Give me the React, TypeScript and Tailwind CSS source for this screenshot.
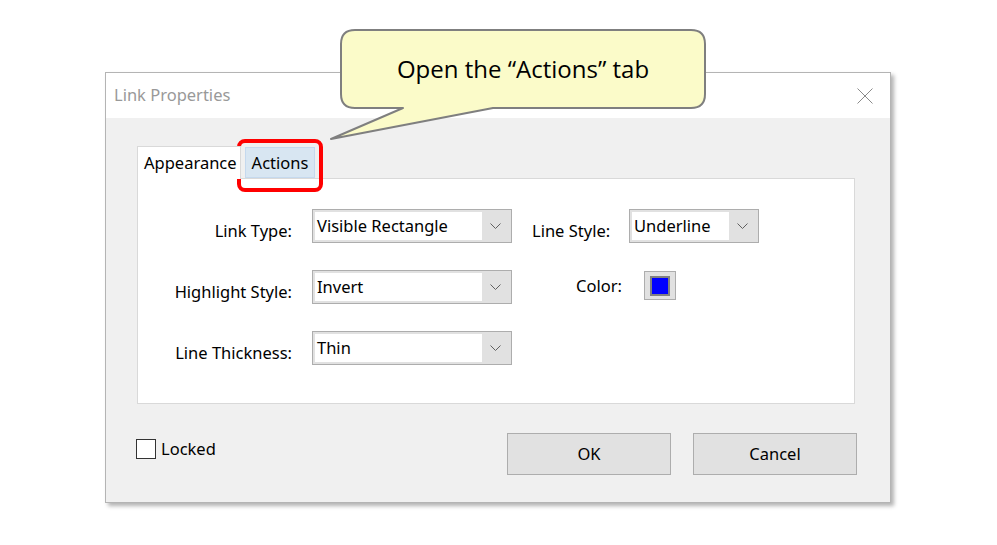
import { ReactNode } from "react";

const ui = { fontFamily: '"Noto Sans", "Open Sans", sans-serif' };

const Chevron = () => (
  <svg width="11" height="6" viewBox="0 0 11 6" fill="none">
    <path d="M0.5 0.5 L5.5 5.5 L10.5 0.5" stroke="#606060" strokeWidth="1" />
  </svg>
);

const Select = ({ value, width }: { value: string; width: string }) => (
  <div className={`${width} h-[34px] flex border border-[#adadad] bg-[#e1e1e1] p-[2px]`}>
    <div className="flex-1 bg-white flex items-center pl-[2px] text-[16.5px] text-black leading-none">
      {value}
    </div>
    <div className="w-[27px] flex items-center justify-center">
      <Chevron />
    </div>
  </div>
);

const Label = ({ children, className }: { children: ReactNode; className?: string }) => (
  <div className={`text-[16.5px] text-black leading-[24px] whitespace-nowrap ${className ?? ""}`}>{children}</div>
);

const Callout = () => (
  <div className="absolute left-[330px] top-[29px] w-[377px] h-[112px]">
    <svg width="377" height="112" viewBox="330 29 377 112" className="absolute inset-0">
      <path
        d="M355 30 H691 Q705 30 705 44 V94 Q705 108 691 108 H493 L331 139 L403 108 H355 Q341 108 341 94 V44 Q341 30 355 30 Z"
        fill="#fbfbc9"
        stroke="#7f7f7f"
        strokeWidth="2"
        strokeLinejoin="round"
      />
    </svg>
    <div
      className="absolute left-[11px] top-[1px] w-[364px] h-[78px] flex items-center justify-center text-[24px] text-black"
      style={{ fontFamily: '"Open Sans", "Noto Sans", sans-serif' }}
    >
      Open the “Actions” tab
    </div>
  </div>
);

export default function App() {
  return (
    <div className="relative w-[997px] h-[545px] bg-white overflow-hidden" style={ui}>
      <div className="pl-[105px] pt-[72px]">
        <div className="w-[786px] h-[431px] border border-[#b4b4b4] bg-[#f0f0f0] shadow-[3px_3px_4px_rgba(0,0,0,0.3)] flex flex-col">
          <div className="h-[45px] bg-white flex items-center justify-between pl-[8px] pr-[17px]">
            <span className="text-[16.5px] text-[#999999]">Link Properties</span>
            <svg width="16" height="16" viewBox="0 0 16 16">
              <path d="M0.5 0.5 L15.5 15.5 M15.5 0.5 L0.5 15.5" stroke="#8a8a8a" strokeWidth="1" />
            </svg>
          </div>

          <div className="pl-[31px] pr-[35px] pt-[29px] flex flex-col">
            <div className="flex items-end h-[32px] -mb-px relative z-10">
              <div className="h-[33px] w-[104px] bg-white border border-b-0 border-[#d9d9d9] pl-[6px] flex items-center text-[16.5px] text-black">
                Appearance
              </div>
              <div className="h-[31px] w-[70px] ml-[4px] mb-px bg-[#d8e6f2] border border-[#c5d9ee] flex items-center justify-center pt-[2px] text-[16.5px] text-black">
                Actions
              </div>
            </div>

            <div className="h-[226px] bg-white border border-[#d9d9d9] pt-[30px] flex flex-col gap-[27px]">
              <div className="flex items-start">
                <Label className="w-[154px] text-right mt-[10px]">Link Type:</Label>
                <div className="ml-[20px]">
                  <Select value="Visible Rectangle" width="w-[200px]" />
                </div>
                <Label className="ml-[20px] w-[77px] mt-[10px]">Line Style:</Label>
                <div className="ml-[20px]">
                  <Select value="Underline" width="w-[130px]" />
                </div>
              </div>

              <div className="flex items-start">
                <Label className="w-[154px] text-right mt-[10px]">Highlight Style:</Label>
                <div className="ml-[20px]">
                  <Select value="Invert" width="w-[200px]" />
                </div>
                <Label className="ml-[64px] w-[48px] mt-[4px]">Color:</Label>
                <div className="ml-[20px] mt-px w-[32px] h-[29px] border border-[#adadad] bg-[#e1e1e1] flex items-center justify-center">
                  <div className="w-[20px] h-[20px] border-2 border-[#808080] bg-[#0000ff]" />
                </div>
              </div>

              <div className="flex items-start">
                <Label className="w-[154px] text-right mt-[10px]">Line Thickness:</Label>
                <div className="ml-[20px]">
                  <Select value="Thin" width="w-[200px]" />
                </div>
              </div>
            </div>

            <div className="flex items-start justify-between mt-[29px]">
              <label className="flex items-center gap-[5px] mt-[5px] -ml-px">
                <span className="w-[20px] h-[20px] border border-[#333333] bg-white" />
                <span className="text-[16.5px] text-black leading-[22px]">Locked</span>
              </label>
              <div className="flex gap-[22px] -mr-[2px]">
                <button className="w-[164px] h-[42px] bg-[#e1e1e1] border border-[#adadad] text-[16.5px] text-black">
                  OK
                </button>
                <button className="w-[164px] h-[42px] bg-[#e1e1e1] border border-[#adadad] text-[16.5px] text-black">
                  Cancel
                </button>
              </div>
            </div>
          </div>
        </div>
      </div>

      <Callout />

      <div className="absolute left-[237px] top-[139px] w-[86px] h-[53px] border-[4px] border-[#ff0000] rounded-[8px]" />
    </div>
  );
}
